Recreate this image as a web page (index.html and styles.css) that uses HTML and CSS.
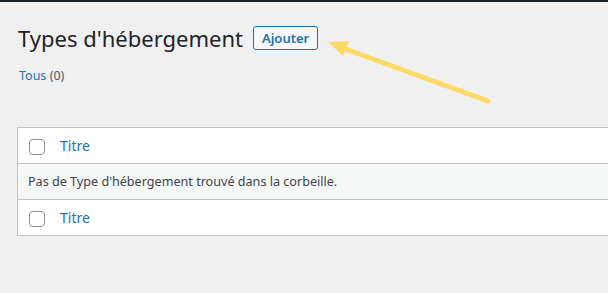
FILE: index.html
```html
<!DOCTYPE html>
<html lang="fr">
  <head>
    <meta charset="UTF-8" />
    <title>Types d'hébergement</title>
    <link rel="stylesheet" href="styles.css">
  </head>
  <body>
    <div class="adminbar"></div>

    <div class="wrap">
      <div class="page-head">
        <h1>Types d'hébergement</h1>
        <a class="add-btn" href="#">Ajouter</a>
      </div>

      <ul class="subsubsub">
        <li><a href="#">Tous</a> <span class="count">(0)</span></li>
      </ul>

      <table class="list-table">
        <thead>
          <tr>
            <td class="check-col"><span class="checkbox"></span></td>
            <th><a href="#">Titre</a></th>
          </tr>
        </thead>
        <tbody>
          <tr class="no-items">
            <td colspan="2">Pas de Type d'hébergement trouvé dans la corbeille.</td>
          </tr>
        </tbody>
        <tfoot>
          <tr>
            <td class="check-col"><span class="checkbox"></span></td>
            <th><a href="#">Titre</a></th>
          </tr>
        </tfoot>
      </table>
    </div>

    <!-- annotation arrow -->
    <svg class="arrow" width="608" height="293" viewBox="0 0 608 293">
      <line x1="488" y1="101" x2="340" y2="47" stroke="#ffd966" stroke-width="5" stroke-linecap="round" />
      <polygon points="328,42 349,41 343,56" fill="#ffd966" />
    </svg>
  </body>
</html>
```

FILE: styles.css
```css
:root {
  --wp-blue: #2271b1;
  --wp-text: #1d2327;
  --wp-muted: #50575e;
  --wp-border: #c3c4c7;
  --wp-bg: #f0f0f1;
}

body {
  font-family: "Noto Sans", "Open Sans", sans-serif;
  background-color: var(--wp-bg);
  color: #3c434a;
  margin: 0;
  width: 608px;
  height: 293px;
  overflow: hidden;
  position: relative;
}

.adminbar {
  height: 2px;
  background: var(--wp-text);
}

.wrap {
  padding: 0 0 0 17px;
}

.page-head {
  display: flex;
  align-items: center;
  gap: 10px;
  padding-top: 22px;
  height: 27px;
}

h1 {
  font-size: 22px;
  font-weight: 400;
  color: var(--wp-text);
  margin: 0 0 0 1px;
}

.add-btn {
  display: inline-block;
  border: 1px solid var(--wp-blue);
  border-radius: 3px;
  background: #f6f7f7;
  color: var(--wp-blue);
  font-size: 13px;
  font-weight: 600;
  text-decoration: none;
  padding: 0 8px;
  line-height: 22px;
}

.subsubsub {
  list-style: none;
  margin: 16px 0 0 2px;
  padding: 0;
  font-size: 12.5px;
  color: var(--wp-muted);
}

.subsubsub a {
  color: var(--wp-blue);
  text-decoration: none;
}

.list-table {
  margin-top: 43px;
  width: 591px;
  border-collapse: collapse;
  background: white;
  border: 1px solid var(--wp-border);
  border-right: none;
  font-size: 12.6px;
}

.list-table th,
.list-table td {
  text-align: left;
  height: 35px;
  padding: 0;
  vertical-align: middle;
}

.list-table thead tr,
.list-table tbody tr {
  border-bottom: 1px solid var(--wp-border);
}

.list-table th {
  font-weight: 400;
  font-size: 14px;
}

.list-table th a {
  color: var(--wp-blue);
  text-decoration: none;
  padding-left: 11px;
}

.check-col {
  width: 20px;
  padding-left: 11px !important;
}

.checkbox {
  display: block;
  width: 14px;
  height: 14px;
  border: 1px solid #8c8f94;
  border-radius: 4px;
  background: white;
  margin-top: 2px;
}

.no-items td {
  background: #f6f7f7;
  padding-left: 10px;
  color: #3c434a;
}

.arrow {
  position: absolute;
  left: 0;
  top: 0;
  pointer-events: none;
}
```
